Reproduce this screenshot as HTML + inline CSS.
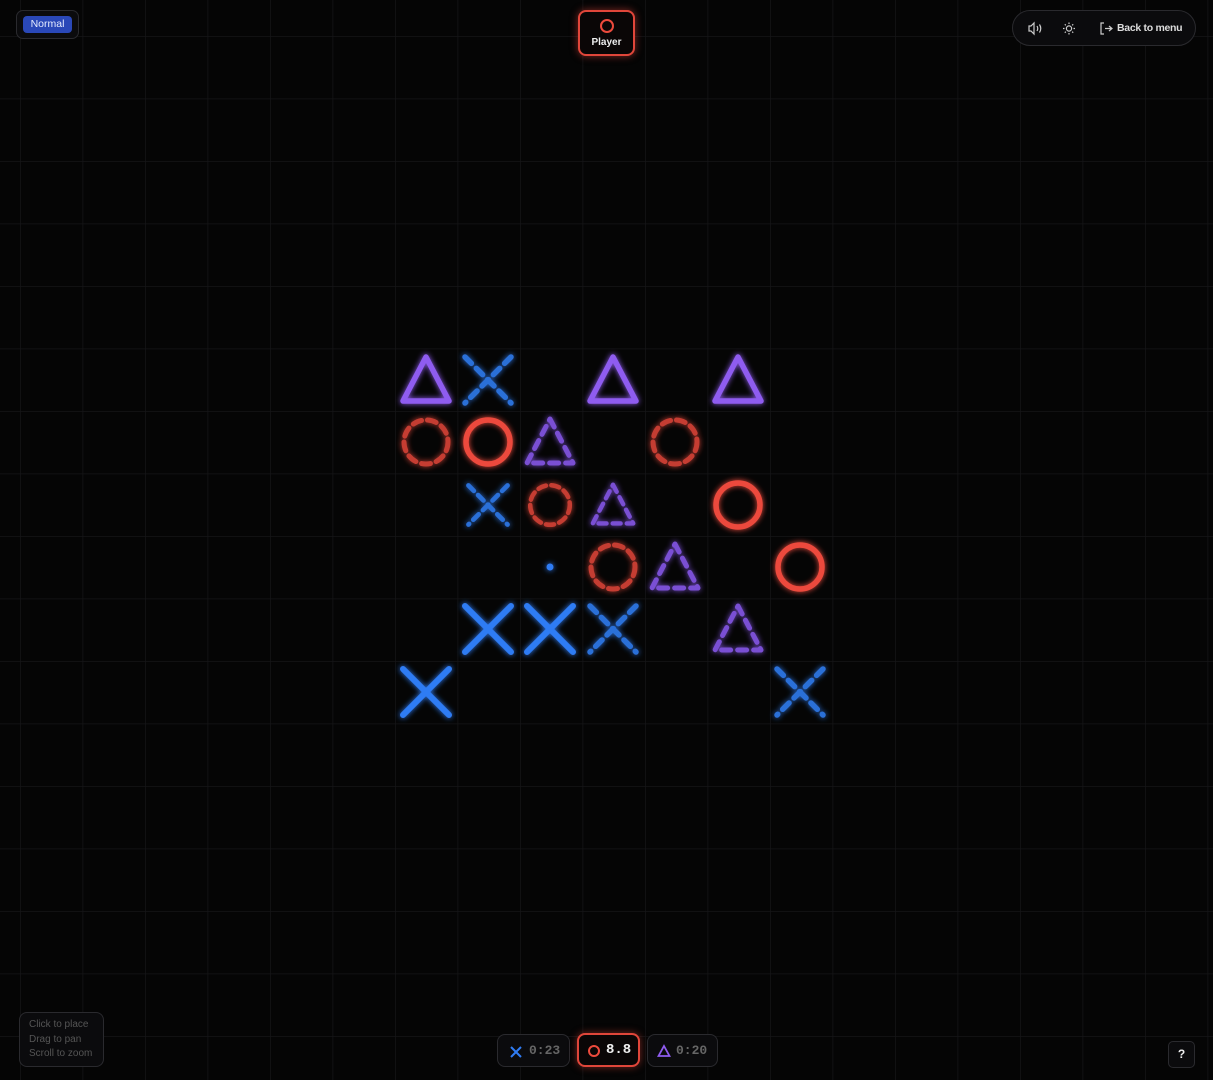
<!DOCTYPE html>
<html><head><meta charset="utf-8"><style>
*{margin:0;padding:0;box-sizing:border-box}
body{width:1213px;height:1080px;background:#050505;overflow:hidden;position:relative;font-family:"Liberation Sans",sans-serif;color:#ddd}
svg.bg{position:absolute;left:0;top:0}
.pill{position:absolute;border:1px solid #2a2a2e;background:#0b0b0d;border-radius:8px}
.mono{font-family:"Liberation Mono",monospace;font-weight:bold}
</style></head><body>
<svg class="bg" width="1213" height="1080">
<defs>
<pattern id="g" x="20" y="36" width="62.5" height="62.5" patternUnits="userSpaceOnUse">
<path d="M0 0V62.5M0 0H62.5" stroke="#151517" stroke-width="1.5" fill="none"/></pattern>
<filter id="gl" x="-50%" y="-50%" width="200%" height="200%"><feGaussianBlur stdDeviation="3" result="b"/><feMerge><feMergeNode in="b"/><feMergeNode in="SourceGraphic"/></feMerge></filter>
<g id="T"><polygon points="0,-23 23,21 -23,21" stroke-linejoin="round"/></g>
<g id="X"><path d="M-23,-23L23,23M23,-23L-23,23"/></g>
<g id="O"><circle r="22"/></g>
</defs>
<rect width="1213" height="1080" fill="url(#g)"/>
<g fill="none" stroke-linecap="round" filter="url(#gl)">
<!-- solid -->
<g stroke="#8f5cf0" stroke-width="5.5">
<use href="#T" x="426" y="380"/><use href="#T" x="613" y="380"/><use href="#T" x="738" y="380"/>
</g>
<g stroke="#ec4a3c" stroke-width="5.5">
<use href="#O" x="488" y="442"/><use href="#O" x="738" y="505"/><use href="#O" x="800" y="567"/>
</g>
<g stroke="#2f7cf4" stroke-width="6">
<use href="#X" x="488" y="629"/><use href="#X" x="550" y="629"/><use href="#X" x="426" y="692"/>
</g>
<!-- dashed -->
<g stroke="#2a6fd8" stroke-width="5.5" stroke-dasharray="9 7">
<use href="#X" x="488" y="380"/><use href="#X" x="613" y="629"/><use href="#X" x="800" y="692"/>
<g transform="translate(488 505) scale(.85)"><use href="#X"/></g>
</g>
<g stroke="#c53c32" stroke-width="5" stroke-dasharray="9 6">
<use href="#O" x="426" y="442"/><use href="#O" x="675" y="442"/><use href="#O" x="613" y="567"/>
<g transform="translate(550 505) scale(.9)"><use href="#O"/></g>
</g>
<g stroke="#7a4fd4" stroke-width="5" stroke-dasharray="9 7">
<use href="#T" x="550" y="442"/><use href="#T" x="675" y="567"/><use href="#T" x="738" y="629"/>
<g transform="translate(613 505) scale(.88)"><use href="#T"/></g>
</g>
<circle cx="550" cy="567" r="3.5" fill="#2f7cf4" stroke="none"/>
</g>
</svg>

<div class="pill" style="left:16px;top:10px;width:63px;height:29px;border-radius:7px"></div>
<div style="position:absolute;left:23px;top:16px;width:49px;height:17px;background:#2a48b8;border-radius:4px;font-size:10.5px;color:#e6ecff;text-align:center;line-height:17px">Normal</div>

<div style="position:absolute;left:578px;top:10px;width:57px;height:46px;border:2px solid #e0463a;border-radius:8px;background:#0a0606;box-shadow:0 0 8px rgba(230,70,58,.55)">
<svg width="53" height="24" style="position:absolute;left:0;top:2px"><circle cx="27" cy="12" r="6" fill="none" stroke="#ec4a3c" stroke-width="2"/></svg>
<div style="position:absolute;top:25px;width:100%;text-align:center;font-size:10px;font-weight:bold;color:#eee">Player</div>
</div>

<div class="pill" style="left:1012px;top:10px;width:184px;height:36px;border-radius:18px">
<svg width="184" height="36" style="position:absolute;left:0;top:0" fill="none" stroke="#ccc" stroke-width="1.2">
<path d="M16 15h2l3-3v11l-3-3h-2z"/><path d="M24 15q1.5 2.5 0 5M26.5 13.5q2.5 4 0 8"/>
<circle cx="56" cy="17.5" r="2.6"/><path d="M56 11.5v1.5M56 22v1.5M50 17.5h1.5M60.5 17.5h1.5M51.8 13.3l1 1M59.2 20.7l1 1M60.2 13.3l-1 1M52.8 20.7l-1 1"/>
<path d="M91 12h-3v11h3M92 17.5h7M96 15l3 2.5-3 2.5"/>
</svg>
<div style="position:absolute;left:104px;top:11px;font-size:10.5px;font-weight:bold;color:#ddd;letter-spacing:-.3px">Back to menu</div>
</div>

<div class="pill" style="left:19px;top:1012px;width:85px;height:55px;font-size:10px;color:#555;line-height:14.5px;padding:5px 0 0 9px">Click to place<br>Drag to pan<br>Scroll to zoom</div>

<div class="pill" style="left:497px;top:1034px;width:73px;height:33px">
<svg width="14" height="14" style="position:absolute;left:11px;top:10px"><path d="M2 2L12 12M12 2L2 12" stroke="#2f7cf4" stroke-width="2"/></svg>
<div class="mono" style="position:absolute;left:31px;top:8px;font-size:13px;color:#666">0:23</div></div>
<div style="position:absolute;left:577px;top:1033px;width:63px;height:34px;border:2px solid #e0463a;border-radius:8px;background:#0a0606;box-shadow:0 0 8px rgba(230,70,58,.5)">
<svg width="14" height="14" style="position:absolute;left:8px;top:9px"><circle cx="7" cy="7" r="5" fill="none" stroke="#ec4a3c" stroke-width="2"/></svg>
<div class="mono" style="position:absolute;left:27px;top:7px;font-size:14px;color:#eee">8.8</div></div>
<div class="pill" style="left:647px;top:1034px;width:71px;height:33px">
<svg width="14" height="14" style="position:absolute;left:9px;top:9px"><polygon points="7,2 12.5,12 1.5,12" fill="none" stroke="#8f5cf0" stroke-width="1.8"/></svg>
<div class="mono" style="position:absolute;left:28px;top:8px;font-size:13px;color:#666">0:20</div></div>

<div class="pill" style="left:1168px;top:1041px;width:27px;height:27px;border-radius:5px;text-align:center;line-height:25px;font-size:12px;font-weight:bold;color:#eee">?</div>
</body></html>
